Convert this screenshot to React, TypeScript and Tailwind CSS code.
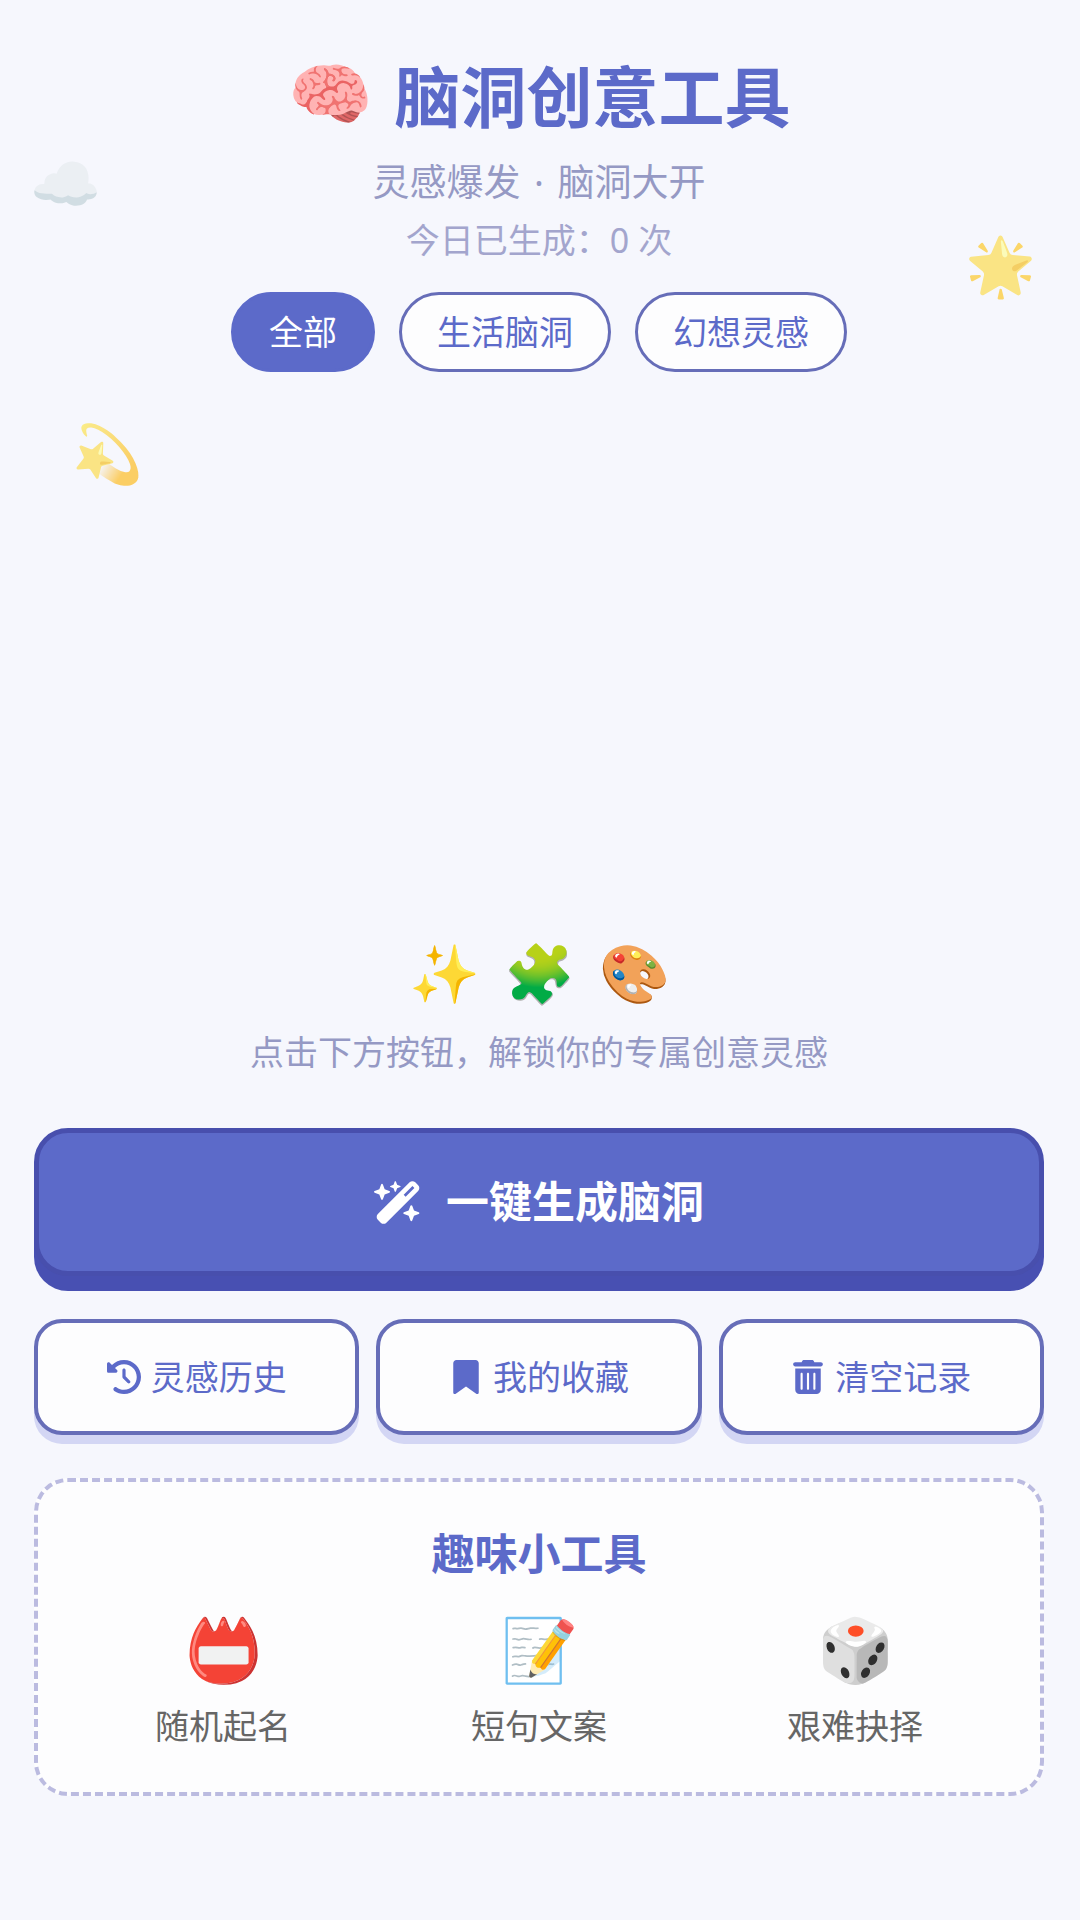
import React from 'react';
import { FaBookmark, FaClockRotateLeft, FaTrashCan, FaWandMagicSparkles } from 'react-icons/fa6';

const filters = ['全部', '生活脑洞', '幻想灵感'];

const actions = [
  { label: '灵感历史', icon: FaClockRotateLeft },
  { label: '我的收藏', icon: FaBookmark },
  { label: '清空记录', icon: FaTrashCan },
];

const tools = [
  { label: '随机起名', emoji: '📛' },
  { label: '短句文案', emoji: '📝' },
  { label: '艰难抉择', emoji: '🎲' },
];

export default function App() {
  return (
    <div className="relative flex min-h-screen flex-col bg-[#f6f7fd] pt-12 pr-9 pb-[124px] pl-[34px] font-['Noto_Sans','Noto_Sans_CJK_SC',sans-serif] text-[#5c6ac9]">
      {/* Floating decorations */}
      <span className="absolute top-[148px] left-[30px] text-[57px] leading-[68px] opacity-60">☁️</span>
      <span className="absolute top-[230px] right-11 text-[57px] leading-[68px] opacity-60">🌟</span>
      <span className="absolute top-[418px] left-[72px] text-[57px] leading-[68px] opacity-60">💫</span>

      <header className="flex flex-col items-center">
        <h1 className="flex items-start gap-[22px] text-[66px] leading-[96px] font-bold">
          <span className="text-[68px] leading-[88px]">🧠</span>
          脑洞创意工具
        </h1>
        <p className="mt-2 text-[37px] leading-[60px] text-[#9599c4]">
          灵感爆发<span className="mx-1"> · </span>脑洞大开
        </p>
        <p className="text-[34px] leading-[56px] text-[#a3a5cd]">今日已生成：0 次</p>
        <div className="mt-6 flex gap-6">
          {filters.map((name, i) => (
            <button
              key={name}
              className={
                i === 0
                  ? 'h-20 rounded-full border-3 border-[#5c6ac9] bg-[#5c6ac9] px-[35px] text-[34px] text-white'
                  : 'h-20 rounded-full border-3 border-[#666db8] bg-[#fdfdfe] px-[35px] text-[34px]'
              }
            >
              {name}
            </button>
          ))}
        </div>
      </header>

      <main className="flex flex-1 flex-col justify-end">
        <div className="flex justify-center gap-6 text-[57px] leading-[68px]">
          <span>✨</span>
          <span>🧩</span>
          <span>🎨</span>
        </div>
        <p className="mt-4 text-center text-[34px] leading-[60px] text-[#9599c4]">
          点击下方按钮，解锁你的专属创意灵感
        </p>

        <button className="mt-[46px] flex h-[148px] items-center justify-center gap-6 rounded-[34px] border-5 border-[#484fad] bg-[#5c6ac9] text-[43px] font-bold text-white shadow-[0_15px_0_#4850b2]">
          <FaWandMagicSparkles className="h-[43px] w-12" />
          一键生成脑洞
        </button>

        <div className="mt-[43px] grid grid-cols-3 gap-[17px]">
          {actions.map(({ label, icon: Icon }) => (
            <button
              key={label}
              className="flex h-[116px] items-center justify-center gap-[10px] rounded-[28px] border-4 border-[#666db8] bg-[#fdfdfe] text-[34px] shadow-[0_9px_0_#d3d6f4]"
            >
              <Icon className="h-[34px] w-auto" />
              {label}
            </button>
          ))}
        </div>

        <section className="mt-[43px] rounded-[34px] border-4 border-dashed border-[#bbbbe0] bg-[#fdfdfe] px-[34px] pt-[42px] pb-9">
          <h2 className="text-center text-[43px] leading-[60px] font-bold">趣味小工具</h2>
          <div className="mt-6 grid grid-cols-3 gap-[14px]">
            {tools.map((tool) => (
              <button key={tool.label} className="flex flex-col items-center gap-2 text-[#666]">
                <span className="text-[62px] leading-[80px]">{tool.emoji}</span>
                <span className="text-[34px] leading-[60px]">{tool.label}</span>
              </button>
            ))}
          </div>
        </section>
      </main>
    </div>
  );
}
